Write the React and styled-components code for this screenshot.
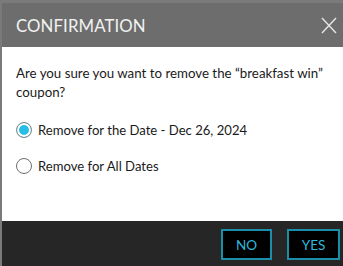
import React, { useState } from 'react';
import styled, { createGlobalStyle } from 'styled-components';

const GlobalStyle = createGlobalStyle`
  html, body {
    margin: 0;
    padding: 0;
    background: #7a7a7a;
    overflow: hidden;
  }
  body {
    font-family: Lato, "Liberation Sans", sans-serif;
  }
`;

const Backdrop = styled.div`
  width: 343px;
  height: 266px;
  padding: 3px 0 0 2px;
  box-sizing: border-box;
  background: #7a7a7a;
  overflow: hidden;
`;

const Modal = styled.div`
  width: 345px;
  display: flex;
  flex-direction: column;
  background: #fff;
`;

const Header = styled.div`
  height: 44px;
  display: flex;
  align-items: center;
  justify-content: space-between;
  padding: 0 5px 0 14px;
  background: #6d6d6d;
  color: #f2f2f2;
`;

const Title = styled.h4`
  margin: 0;
  font-size: 16.8px;
  font-weight: 400;
  letter-spacing: 0.1px;
`;

const Close = styled.button`
  width: 22px;
  height: 22px;
  padding: 0;
  margin-right: 2px;
  border: none;
  background: none;
  cursor: pointer;
  display: flex;
  align-items: center;
  justify-content: center;
`;

const Body = styled.div`
  height: 174px;
  padding: 17px 14px 0;
  box-sizing: border-box;
  color: #1a1a1a;
`;

const Message = styled.p`
  margin: 0 0 18px;
  font-size: 13.3px;
  line-height: 19px;
`;

const Options = styled.div`
  display: flex;
  flex-direction: column;
  gap: 16px;
`;

const Option = styled.label`
  display: flex;
  align-items: center;
  gap: 6px;
  height: 20px;
  font-size: 13.1px;
  cursor: pointer;
`;

const Radio = styled.span`
  width: 16px;
  height: 16px;
  box-sizing: border-box;
  border-radius: 50%;
  border: 1px solid ${(p) => (p.checked ? '#8a8a8a' : '#6f6f6f')};
  background: ${(p) => (p.checked ? '#27bfe8' : '#fff')};
  box-shadow: ${(p) => (p.checked ? 'inset 0 0 0 2px #fff' : 'none')};
  flex-shrink: 0;
`;

const Footer = styled.div`
  height: 45px;
  display: flex;
  justify-content: flex-end;
  align-items: flex-start;
  gap: 15px;
  padding: 8px 7px 0 0;
  box-sizing: border-box;
  background: #262626;
`;

const Button = styled.button`
  height: 31px;
  min-width: ${(p) => p.width}px;
  box-sizing: border-box;
  border: 2px solid #1b8ea9;
  background: #000;
  color: #2cb9de;
  font-family: Lato, "Liberation Sans", sans-serif;
  font-size: 13.5px;
  text-transform: uppercase;
  cursor: pointer;
`;

const options = [
  { id: 'date', label: 'Remove for the Date - Dec 26, 2024' },
  { id: 'all', label: 'Remove for All Dates' },
];

const App = () => {
  const [choice, setChoice] = useState('date');

  return (
    <>
      <GlobalStyle />
      <Backdrop>
        <Modal>
          <Header>
            <Title>CONFIRMATION</Title>
            <Close aria-label="close">
              <svg width="16" height="17" viewBox="0 0 16 17">
                <path d="M1 1 L15 16 M15 1 L1 16" stroke="#e6e6e6" strokeWidth="1.4" fill="none" />
              </svg>
            </Close>
          </Header>
          <Body>
            <Message>
              Are you sure you want to remove the “breakfast win” coupon?
            </Message>
            <Options>
              {options.map((o) => (
                <Option key={o.id} onClick={() => setChoice(o.id)}>
                  <Radio checked={choice === o.id} />
                  {o.label}
                </Option>
              ))}
            </Options>
          </Body>
          <Footer>
            <Button width={51}>No</Button>
            <Button width={53}>Yes</Button>
          </Footer>
        </Modal>
      </Backdrop>
    </>
  );
};

export default App;
